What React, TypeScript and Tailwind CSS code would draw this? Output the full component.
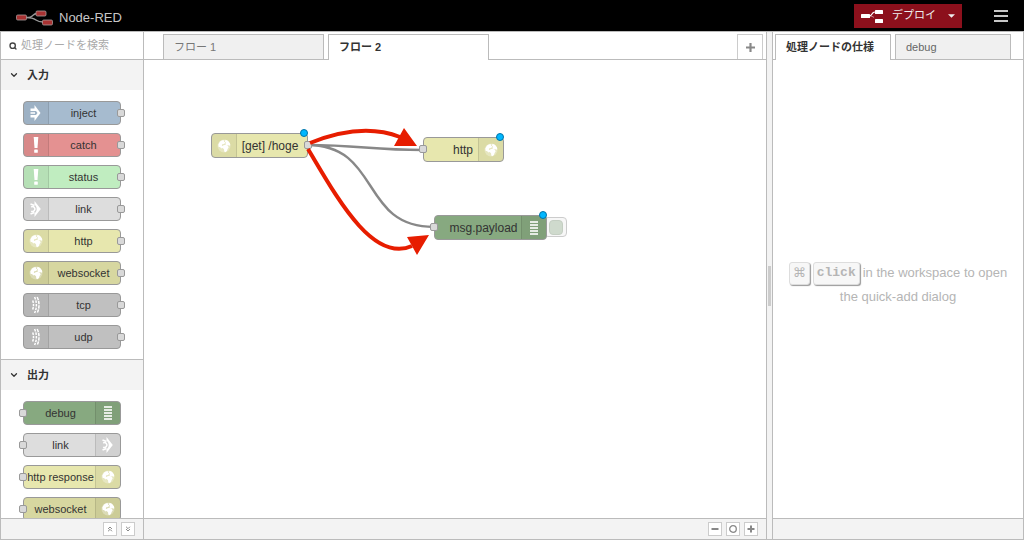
import { ChevronDown, ChevronsDown, ChevronsUp, Search } from "lucide-react";

type IconName = "inject" | "alert" | "link" | "globe" | "bridge" | "debug";

type PaletteNodeProps = {
  label: string;
  color: string;
  icon: IconName;
  output?: boolean;
  pad?: string;
};

const inputs: PaletteNodeProps[] = [
  { label: "inject", color: "bg-[#a6bbcf]", icon: "inject" },
  { label: "catch", color: "bg-[#e49191]", icon: "alert" },
  { label: "status", color: "bg-[#c0edc0]", icon: "alert" },
  { label: "link", color: "bg-[#dddddd]", icon: "link" },
  { label: "http", color: "bg-[#e7e7ae]", icon: "globe" },
  { label: "websocket", color: "bg-[#d7d7a0]", icon: "globe" },
  { label: "tcp", color: "bg-[#c0c0c0]", icon: "bridge" },
  { label: "udp", color: "bg-[#c0c0c0]", icon: "bridge" },
];

const outputs: PaletteNodeProps[] = [
  { label: "debug", color: "bg-[#87a980]", icon: "debug" },
  { label: "link", color: "bg-[#dddddd]", icon: "link" },
  { label: "http response", color: "bg-[#e7e7ae]", icon: "globe" },
  { label: "websocket", color: "bg-[#d7d7a0]", icon: "globe" },
];

function NodeIcon({ name }: { name: IconName }) {
  return (
    <svg viewBox="0 0 20 20" className="h-5 w-5" fill="#fff" aria-hidden="true">
      {name === "inject" && (
        <path
          fillRule="evenodd"
          d="M8.500 2 14.500 10 8.500 18V14.500H4.500V12H10L11.500 10 10 8H4.500V5.500h4zM4.500 9.200H9v1.600H4.500z"
        />
      )}
      {name === "alert" && (
        <>
          <path d="M7.700 2h4.600l-.8 11H8.500z" />
          <rect x="8.200" y="14.400" width="3.600" height="3.400" rx=".6" />
        </>
      )}
      {name === "link" && (
        <>
          <path d="M8.500 2 14.800 10 8.500 18v-3.800c1.400-.8 2.200-2.400 2.200-4.200S9.900 6.600 8.500 5.800z" />
          <path d="M5.200 8a2.400 2.400 0 1 1 0 4" fill="none" stroke="#fff" strokeWidth="1.500" />
          <path d="M4.500 5 8.500 6.500M4.500 15l4-1.500" stroke="#fff" strokeWidth="1.800" />
        </>
      )}
      {name === "globe" && (
        <>
          <circle cx="10" cy="10" r="6.500" opacity=".3" />
          <path d="M4.300 8.400 6 5.500 8.300 4.200l2.200.1-.6 1.300 1.500.8-1.300 1.500-1.800.3-.5 1.300 1.500.8-.2 1.500-1.500.6-1.700-1.500-1.200.2z" />
          <path d="m11.500 3.800 2.500.9 1.900 2.500.4 2-1.200.6-1-.9-1.300.5-1.400-1.200.5-1.600-1-1z" />
          <path d="m9 9.600 2.300-.8 2.300.8 1.100 1.700-1.100 1.600-.7 2-1.700 1.300-.9-.8-.3-2.200-1.300-1.200z" />
        </>
      )}
      {name === "bridge" && (
        <g fill="none" stroke="#fff" strokeWidth="1.500">
          <path d="M11.200 2C13.600 7 13.600 13 11.200 18" strokeDasharray="3.400 .8" />
          <path d="M8.600 2C11 7 11 13 8.600 18" strokeDasharray="2.600 1" />
          <path d="M6.700 5.500c1.100 3 1.100 6 0 9" strokeDasharray="2.400 1" />
        </g>
      )}
      {name === "debug" && (
        <path d="M6 3h8v2H6zM6 6h8v2H6zM6 9h8v2H6zM6 12h8v2H6zM6 15h8v2H6z" opacity=".8" />
      )}
    </svg>
  );
}

function Port({ side }: { side: "left" | "right" }) {
  return (
    <span
      className={`absolute top-2 h-2 w-2 rounded-[2px] border border-[#999] bg-[#d9d9d9] ${
        side === "left" ? "-left-1" : "-right-1"
      }`}
    />
  );
}

function NodeBody({ label, color, icon, output, pad = "" }: PaletteNodeProps) {
  return (
    <div
      className={`flex h-full w-full overflow-hidden rounded-[4px] border border-[#999] ${color} ${
        output ? "flex-row-reverse" : ""
      }`}
    >
      <div
        className={`flex w-[25px] shrink-0 items-center justify-center border-black/10 bg-black/5 ${
          output ? "border-l" : "border-r"
        }`}
      >
        <NodeIcon name={icon} />
      </div>
      <div className={`flex min-w-0 flex-1 items-center justify-center whitespace-nowrap ${pad}`}>{label}</div>
    </div>
  );
}

function PaletteNode(props: PaletteNodeProps) {
  return (
    <li className="relative h-6 w-[98px]">
      <NodeBody {...props} pad={props.output ? "pl-[2px]" : "pr-[2px]"} />
      <Port side={props.output ? "left" : "right"} />
    </li>
  );
}

function Category({ title, nodes, output }: { title: string; nodes: PaletteNodeProps[]; output?: boolean }) {
  return (
    <section className="border-b border-[#bbb]">
      <button className="flex h-[30px] w-full items-center gap-2 bg-[#f3f3f3] pl-2 text-[11px] font-bold text-[#333]">
        <ChevronDown className="h-[10px] w-[10px]" strokeWidth={3} />
        {title}
      </button>
      <ul className="flex flex-col gap-2 pt-[11px] pb-[10px] pl-[22px] text-[11px]">
        {nodes.map((node) => (
          <PaletteNode key={node.label} {...node} output={output} />
        ))}
      </ul>
    </section>
  );
}

function Changed() {
  return <span className="absolute -top-1 right-0 h-2 w-2 rounded-full border border-[#0074a8] bg-[#00b7ff]" />;
}

function Canvas() {
  return (
    <div className="relative min-h-0 flex-1 overflow-hidden text-xs">
      <svg className="absolute inset-0 h-full w-full" fill="none" stroke="#888" strokeWidth="2.400">
        <path d="M163 85C215 85 227 90 279 90M163 85C238 85 215 167 290 167" />
      </svg>
      <div className="absolute top-[73px] left-[67px] h-[25px] w-[97px]">
        <NodeBody label="[get] /hoge" color="bg-[#e7e7ae]" icon="globe" pad="pr-1" />
        <Port side="right" />
        <Changed />
      </div>
      <div className="absolute top-[77px] left-[279px] h-[25px] w-[81px]">
        <NodeBody label="http" color="bg-[#e7e7ae]" icon="globe" output pad="pl-6" />
        <Port side="left" />
        <Changed />
      </div>
      <button
        aria-label="msg.payload"
        className="absolute top-[157px] left-[400px] flex h-5 w-[23px] items-center justify-end rounded-[4px] border border-[#ccc] bg-[#f7f7f7] pr-[3px]"
      >
        <span className="h-[15px] w-[14px] rounded-[4px] border border-[#c4cec2] bg-[#cfdacd]" />
      </button>
      <div className="absolute top-[155px] left-[290px] h-[25px] w-[113px]">
        <NodeBody label="msg.payload" color="bg-[#87a980]" icon="debug" output pad="pl-[11px]" />
        <Port side="left" />
        <Changed />
      </div>
      <svg className="pointer-events-none absolute inset-0 h-full w-full">
        <g fill="none" stroke="#e71d00" strokeWidth="4">
          <path d="M166 83Q218 62 256 77" />
          <path d="M164 89C191 134 228 204 268 186" />
        </g>
        <path d="M260 68 250 86 273 86zM263 177 285 175 273 195z" fill="#e71d00" />
      </svg>
    </div>
  );
}

const toolButton = "flex h-[14px] w-[14px] items-center justify-center border border-[#ccc] bg-white text-[#888]";
const tab = "h-full border border-[#bbb] px-[10px] text-left text-[11px]";
const keyCap =
  "flex h-[23px] items-center rounded-[3px] border border-[#ddd] bg-[#f7f7f7] px-[3px] shadow-[1px_1px_1px_#999]";

export default function App() {
  return (
    <div className="flex h-screen flex-col overflow-hidden bg-white font-['Liberation_Sans','Noto_Sans_CJK_JP',sans-serif] text-[#333]">
      <header className="flex h-[31px] shrink-0 items-center justify-between bg-black px-4">
        <div className="flex items-center gap-[6px] pt-1 text-[13px] text-[#c7c7c7]">
          <svg viewBox="0 0 37 16" className="h-4 w-[37px]" aria-hidden="true">
            <path d="M10 7.500C20 7.500 14 3.500 22 3.500M10 7.500c12 0 8 4.500 17 4.500" fill="none" stroke="#999" strokeWidth="1.500" />
            <g fill="#a83232" stroke="#a9a0a0" strokeWidth=".8">
              <rect x=".5" y="5" width="10" height="5" rx="1.200" />
              <rect x="20" y="1" width="10" height="5" rx="1.200" />
              <rect x="26.500" y="10" width="10" height="5" rx="1.200" />
            </g>
          </svg>
          <span>Node-RED</span>
        </div>
        <div className="flex items-center gap-8">
          <button className="flex h-6 w-[108px] items-center bg-[#8c101c] pl-[6px] text-[11px] text-[#eee]">
            <svg viewBox="0 0 24 16" className="mr-2 h-4 w-6" fill="#fff" aria-hidden="true">
              <path d="M9 8c4 0 2-4 6-4" fill="none" stroke="#fff" strokeWidth="1.200" />
              <path d="M9 8c2.500 0 4 .5 5 1.500" fill="none" stroke="#fff" strokeWidth=".5" />
              <rect x="1" y="6" width="9" height="4" rx=".6" />
              <rect x="15" y="2" width="8" height="4" rx=".6" />
              <rect x="15" y="11" width="8" height="4" rx=".6" />
            </svg>
            デプロイ
            <svg viewBox="0 0 8 4" className="ml-3 h-1 w-[7px]" fill="#eee" aria-hidden="true">
              <path d="M0 0h8L4 4z" />
            </svg>
          </button>
          <button aria-label="menu" className="flex w-[14px] flex-col gap-[3px]">
            <span className="h-[2px] w-full bg-[#c7c7c7]" />
            <span className="h-[2px] w-full bg-[#c7c7c7]" />
            <span className="h-[2px] w-full bg-[#c7c7c7]" />
          </button>
        </div>
      </header>

      <main className="flex min-h-0 flex-1 border border-[#bbb]">
        <aside className="flex w-[143px] shrink-0 flex-col border-r border-[#bbb]">
          <label className="flex h-7 shrink-0 items-center gap-1 border-b border-[#bbb] pl-2">
            <Search className="h-2 w-2 shrink-0 text-[#444]" strokeWidth={4} />
            <input
              type="text"
              aria-label="処理ノードを検索"
              placeholder="処理ノードを検索"
              className="w-full min-w-0 text-[11px] outline-none placeholder:text-[#aaa]"
            />
          </label>
          <div className="min-h-0 flex-1 overflow-hidden">
            <Category title="入力" nodes={inputs} />
            <Category title="出力" nodes={outputs} output />
          </div>
          <footer className="flex h-[21px] shrink-0 items-center justify-end gap-1 border-t border-[#bbb] bg-[#f3f3f3] pr-2">
            <button aria-label="collapse" className={toolButton}>
              <ChevronsUp className="h-2 w-2" strokeWidth={3} />
            </button>
            <button aria-label="expand" className={toolButton}>
              <ChevronsDown className="h-2 w-2" strokeWidth={3} />
            </button>
          </footer>
        </aside>

        <section className="flex min-w-0 flex-1 flex-col border-r border-[#bbb]">
          <div className="flex h-7 shrink-0 gap-1 border-b border-[#bbb] pt-[2px] pr-[3px] pl-[19px]">
            <button className={`${tab} w-[161px] border-b-0 bg-[#f0f0f0] text-[#777]`}>フロー 1</button>
            <div className="-mb-px">
              <button className={`${tab} w-[161px] border-b-0 bg-white font-bold`}>フロー 2</button>
            </div>
            <button
              aria-label="add"
              className="ml-auto flex h-full w-[26px] items-center justify-center border border-b-0 border-[#ccc] text-[#888]"
            >
              <svg viewBox="0 0 10 10" className="h-[9px] w-[9px]" stroke="currentColor" strokeWidth="2.400" aria-hidden="true">
                <path d="M0 5h10M5 0v10" />
              </svg>
            </button>
          </div>
          <Canvas />
          <footer className="flex h-[21px] shrink-0 items-center justify-end gap-1 border-t border-[#bbb] bg-[#f3f3f3] pr-2">
            <button aria-label="zoom out" className={toolButton}>
              <svg viewBox="0 0 8 8" className="h-2 w-2" stroke="currentColor" strokeWidth="2">
                <path d="M.5 4h7" />
              </svg>
            </button>
            <button aria-label="reset zoom" className={toolButton}>
              <svg viewBox="0 0 8 8" className="h-2 w-2" fill="none" stroke="currentColor" strokeWidth="1.300">
                <circle cx="4" cy="4" r="3.300" />
              </svg>
            </button>
            <button aria-label="zoom in" className={toolButton}>
              <svg viewBox="0 0 8 8" className="h-2 w-2" stroke="currentColor" strokeWidth="2">
                <path d="M.5 4h7M4 .5v7" />
              </svg>
            </button>
          </footer>
        </section>

        <div className="flex w-[5px] shrink-0 items-center justify-center bg-[#f3f3f3]">
          <span className="h-10 w-[3px] bg-[#ccc]" />
        </div>

        <aside className="flex w-[251px] shrink-0 flex-col border-l border-[#bbb]">
          <div className="flex h-7 shrink-0 gap-1 border-b border-[#bbb] pt-[2px] pr-3 pl-[2px]">
            <div className="-mb-px min-w-0 flex-1">
              <button className={`${tab} w-full border-b-0 bg-white font-bold whitespace-nowrap`}>処理ノードの仕様</button>
            </div>
            <div className="min-w-0 flex-1">
              <button className={`${tab} w-full border-b-0 bg-[#f0f0f0] text-[#666]`}>debug</button>
            </div>
          </div>
          <div className="flex min-h-0 flex-1 flex-col items-center justify-center pb-2 text-[13px] leading-6 text-[#b5b5b5]">
            <div className="flex items-center gap-[3px]">
              <kbd className={`${keyCap} font-['DejaVu_Sans',sans-serif] text-[13px]`}>⌘</kbd>
              <kbd className={`${keyCap} font-['Liberation_Mono',monospace] text-[13px] font-bold`}>click</kbd>
              <span>in the workspace to open</span>
            </div>
            <span>the quick-add dialog</span>
          </div>
          <footer className="h-[21px] shrink-0 border-t border-[#bbb] bg-[#f3f3f3]" />
        </aside>
      </main>
    </div>
  );
}
